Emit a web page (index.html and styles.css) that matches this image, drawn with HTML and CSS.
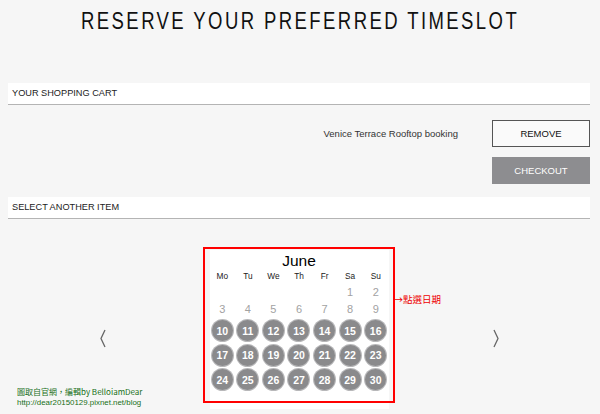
FILE: index.html
```html
<!DOCTYPE html>
<html lang="en">
<head>
    <meta charset="UTF-8">
    <title>Reserve your preferred timeslot</title>
    <link rel="stylesheet" href="styles.css">
</head>
<body>
    <h1 class="title"><span>RESERVE YOUR PREFERRED TIMESLOT</span></h1>

    <div class="section-bar">YOUR SHOPPING CART</div>

    <div class="cart">
        <div class="cart-row">
            <span class="item-name">Venice Terrace Rooftop booking</span>
            <button class="btn btn-remove">REMOVE</button>
        </div>
        <div class="cart-row">
            <button class="btn btn-checkout">CHECKOUT</button>
        </div>
    </div>

    <div class="section-bar">SELECT ANOTHER ITEM</div>

    <div class="picker">
        <svg class="arrow" width="8" height="19" viewBox="0 0 8 19">
            <polyline points="6,1 2,9.5 6,18" fill="none" stroke="#666" stroke-width="1.3"/>
        </svg>

        <div class="calendar">
            <div class="month">June</div>
            <div class="days">
                <div class="wd">Mo</div><div class="wd">Tu</div><div class="wd">We</div><div class="wd">Th</div><div class="wd">Fr</div><div class="wd">Sa</div><div class="wd">Su</div>

                <div class="day"></div><div class="day"></div><div class="day"></div><div class="day"></div><div class="day"></div><div class="day">1</div><div class="day">2</div>
                <div class="day">3</div><div class="day">4</div><div class="day">5</div><div class="day">6</div><div class="day">7</div><div class="day">8</div><div class="day">9</div>

                <div class="day open"><span>10</span></div><div class="day open"><span>11</span></div><div class="day open"><span>12</span></div><div class="day open"><span>13</span></div><div class="day open"><span>14</span></div><div class="day open"><span>15</span></div><div class="day open"><span>16</span></div>
                <div class="day open"><span>17</span></div><div class="day open"><span>18</span></div><div class="day open"><span>19</span></div><div class="day open"><span>20</span></div><div class="day open"><span>21</span></div><div class="day open"><span>22</span></div><div class="day open"><span>23</span></div>
                <div class="day open"><span>24</span></div><div class="day open"><span>25</span></div><div class="day open"><span>26</span></div><div class="day open"><span>27</span></div><div class="day open"><span>28</span></div><div class="day open"><span>29</span></div><div class="day open"><span>30</span></div>
            </div>

            <!-- anotação em cima da imagem -->
            <div class="highlight"></div>
            <div class="note">→點選日期</div>
        </div>

        <svg class="arrow" width="8" height="19" viewBox="0 0 8 19">
            <polyline points="2,1 6,9.5 2,18" fill="none" stroke="#666" stroke-width="1.3"/>
        </svg>
    </div>

    <div class="watermark">
        <div class="wm-line wm-cjk">圖取自官網，編輯by BelloiamDear</div>
        <div class="wm-line">http://dear20150129.pixnet.net/blog</div>
    </div>
</body>
</html>
```

FILE: styles.css
```css
body {
    margin: 0;
    background-color: #f6f6f6;
    font-family: "Liberation Sans", Arial, sans-serif;
    color: #222;
    position: relative;
    height: 414px;
    overflow: hidden;
}

/* titulo principal */
.title {
    margin: 7px 0 48px;
    text-align: center;
    font-size: 23px;
    font-weight: normal;
    line-height: 28px;
    color: #111;
}

.title span {
    display: inline-block;
    letter-spacing: 3px;
    transform: scaleX(0.805);
}

/* barras de secao */
.section-bar {
    margin: 0 10px 0 8px;
    height: 21px;
    line-height: 21px;
    padding-left: 4px;
    background-color: #fff;
    border-bottom: 1px solid #b4b4b4;
    font-size: 9.2px;
    color: #222;
}

.cart {
    margin: 15px 10px 13px 8px;
}

.cart-row {
    display: flex;
    justify-content: flex-end;
    align-items: center;
    gap: 34px;
    margin-bottom: 10px;
}

.cart-row:last-child {
    margin-bottom: 0;
}

.item-name {
    font-size: 9.5px;
    color: #333;
}

.btn {
    width: 98px;
    height: 27px;
    font-family: inherit;
    font-size: 9.5px;
    cursor: pointer;
    box-sizing: border-box;
}

.btn-remove {
    background-color: #fafafa;
    border: 1px solid #555;
    color: #111;
}

.btn-checkout {
    background-color: #8d8d90;
    border: 1px solid #8d8d90;
    color: #fff;
}

/* calendario */
.picker {
    display: flex;
    justify-content: center;
    align-items: center;
    gap: 103px;
    margin: 31px 10px 0 8px;
}

.arrow {
    margin-top: 18px;
}

.calendar {
    position: relative;
    width: 179px;
    padding-bottom: 17px;
    background-color: #fff;
}

.month {
    height: 19px;
    line-height: 21px;
    text-align: center;
    font-size: 15.5px;
    color: #000;
}

.days {
    display: grid;
    grid-template-columns: repeat(7, 1fr);
}

.wd {
    height: 14px;
    line-height: 14px;
    text-align: center;
    font-size: 8.3px;
    color: #222;
}

.day {
    height: 17.6px;
    display: flex;
    justify-content: center;
    align-items: center;
    font-size: 11px;
    color: #a2a2a2;
}

.day.open {
    height: 24.7px;
}

.day.open span {
    width: 21px;
    height: 21px;
    border-radius: 50%;
    background-color: #8a8a8c;
    box-shadow: 0 0 0 1px #b8b8ba;
    color: #fff;
    font-weight: bold;
    font-size: 10.5px;
    display: flex;
    justify-content: center;
    align-items: center;
}

.highlight {
    position: absolute;
    left: -7px;
    top: -3px;
    width: 188px;
    height: 152px;
    border: 2px solid #ff0000;
}

.note {
    position: absolute;
    left: 184px;
    top: 43px;
    white-space: nowrap;
    font-family: "Noto Sans CJK TC", sans-serif;
    font-size: 9.5px;
    line-height: 12px;
    color: #ee0000;
}

/* marca d'agua */
.watermark {
    position: absolute;
    left: 17px;
    top: 386px;
    color: #176e17;
    font-size: 7.9px;
    line-height: 11px;
    text-shadow: 0 0 2px #fff;
}

.wm-cjk {
    font-family: "Noto Sans CJK TC", sans-serif;
    font-size: 8px;
}
```
